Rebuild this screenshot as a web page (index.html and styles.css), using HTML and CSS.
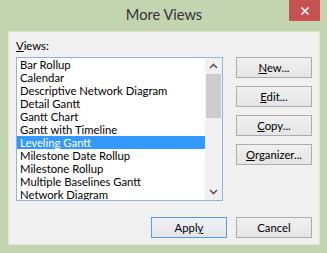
FILE: index.html
```html
<!DOCTYPE html>
<html lang="en">

<head>
  <meta charset="UTF-8">
  <meta name="viewport" content="width=device-width, initial-scale=1.0">
  <title>More Views</title>
  <link rel="stylesheet" href="styles.css">
</head>

<body>
  <div class="window">
    <div class="titlebar">
      <span></span>
      <div class="title">More Views</div>
      <div class="close">
        <svg width="10" height="10" viewBox="0 0 10 10">
          <path d="M1.5 1.5 L8.5 8.5 M8.5 1.5 L1.5 8.5" stroke="#fff" stroke-width="1.6" fill="none" />
        </svg>
      </div>
    </div>
    <div class="panel">
      <div class="label"><u>V</u>iews:</div>
      <div class="main">
        <div class="listbox">
          <ul class="items">
            <li>Bar Rollup</li>
            <li>Calendar</li>
            <li>Descriptive Network Diagram</li>
            <li>Detail Gantt</li>
            <li>Gantt Chart</li>
            <li>Gantt with Timeline</li>
            <li class="selected">Leveling Gantt</li>
            <li>Milestone Date Rollup</li>
            <li>Milestone Rollup</li>
            <li>Multiple Baselines Gantt</li>
            <li>Network Diagram</li>
          </ul>
          <div class="scrollbar">
            <div class="arrow">
              <svg width="9" height="6" viewBox="0 0 9 6">
                <path d="M1 5 L4.5 1.5 L8 5" stroke="#5a5a5a" stroke-width="1.6" fill="none" />
              </svg>
            </div>
            <div class="track">
              <div class="thumb"></div>
            </div>
            <div class="arrow">
              <svg width="9" height="6" viewBox="0 0 9 6">
                <path d="M1 1 L4.5 4.5 L8 1" stroke="#5a5a5a" stroke-width="1.6" fill="none" />
              </svg>
            </div>
          </div>
        </div>
        <div class="side-buttons">
          <button class="button"><u>N</u>ew...</button>
          <button class="button"><u>E</u>dit...</button>
          <button class="button"><u>C</u>opy...</button>
          <button class="button"><u>O</u>rganizer...</button>
        </div>
      </div>
      <div class="footer">
        <button class="button default">Appl<u>y</u></button>
        <button class="button">Cancel</button>
      </div>
    </div>
  </div>
</body>

</html>
```

FILE: styles.css
```css
html,
body {
  margin: 0;
  padding: 0;
  background-color: #c3d4b0;
}

* {
  box-sizing: border-box;
}

.window {
  width: 327px;
  height: 253px;
  display: flex;
  flex-direction: column;
  padding: 0 7px 8px 8px;
  background-color: #c3d4b0;
  font-family: Lato, "Noto Sans", sans-serif;
  font-size: 11.3px;
  color: #000;
}

.titlebar {
  height: 31px;
  display: grid;
  grid-template-columns: 31px 1fr 31px;
}

.title {
  text-align: center;
  font-size: 14.6px;
  line-height: 29px;
  color: #333;
}

.close {
  height: 21px;
  background-color: #c75050;
  display: flex;
  justify-content: center;
  align-items: center;
}

.panel {
  flex: 1;
  display: flex;
  flex-direction: column;
  background-color: #f0f0f0;
  border: 1px solid #dde5d3;
  padding: 6px 7px 6px 7px;
}

.label {
  line-height: 15px;
  margin-bottom: 4px;
}

.main {
  display: flex;
  gap: 13px;
}

.listbox {
  width: 207px;
  height: 144px;
  display: flex;
  border: 1px solid #8eb5e0;
  background-color: #fff;
  overflow: hidden;
}

.items {
  flex: 1;
  list-style: none;
  margin: 0;
  padding: 0;
}

.items li {
  height: 13px;
  line-height: 13px;
  padding-left: 3px;
  white-space: nowrap;
}

.items li.selected {
  background-color: #3399ff;
  color: #fff;
}

.scrollbar {
  width: 17px;
  display: flex;
  flex-direction: column;
  background-color: #f0f0f0;
}

.arrow {
  height: 16px;
  display: flex;
  justify-content: center;
  align-items: center;
}

.track {
  flex: 1;
  padding: 0 1px;
}

.thumb {
  height: 44px;
  background-color: #cdcdcd;
}

.side-buttons {
  display: flex;
  flex-direction: column;
  gap: 8px;
}

.button {
  width: 76px;
  height: 21px;
  padding: 0;
  font-family: inherit;
  font-size: 11.3px;
  color: #000;
  background: linear-gradient(#f0f0f0, #e5e5e5);
  border: 1px solid #acacac;
  border-radius: 0;
}

.button.default {
  border-color: #569de5;
  background: linear-gradient(#eef0f2, #e3e6ea);
}

.footer {
  margin-top: auto;
  display: flex;
  justify-content: flex-end;
  gap: 9px;
}
```
